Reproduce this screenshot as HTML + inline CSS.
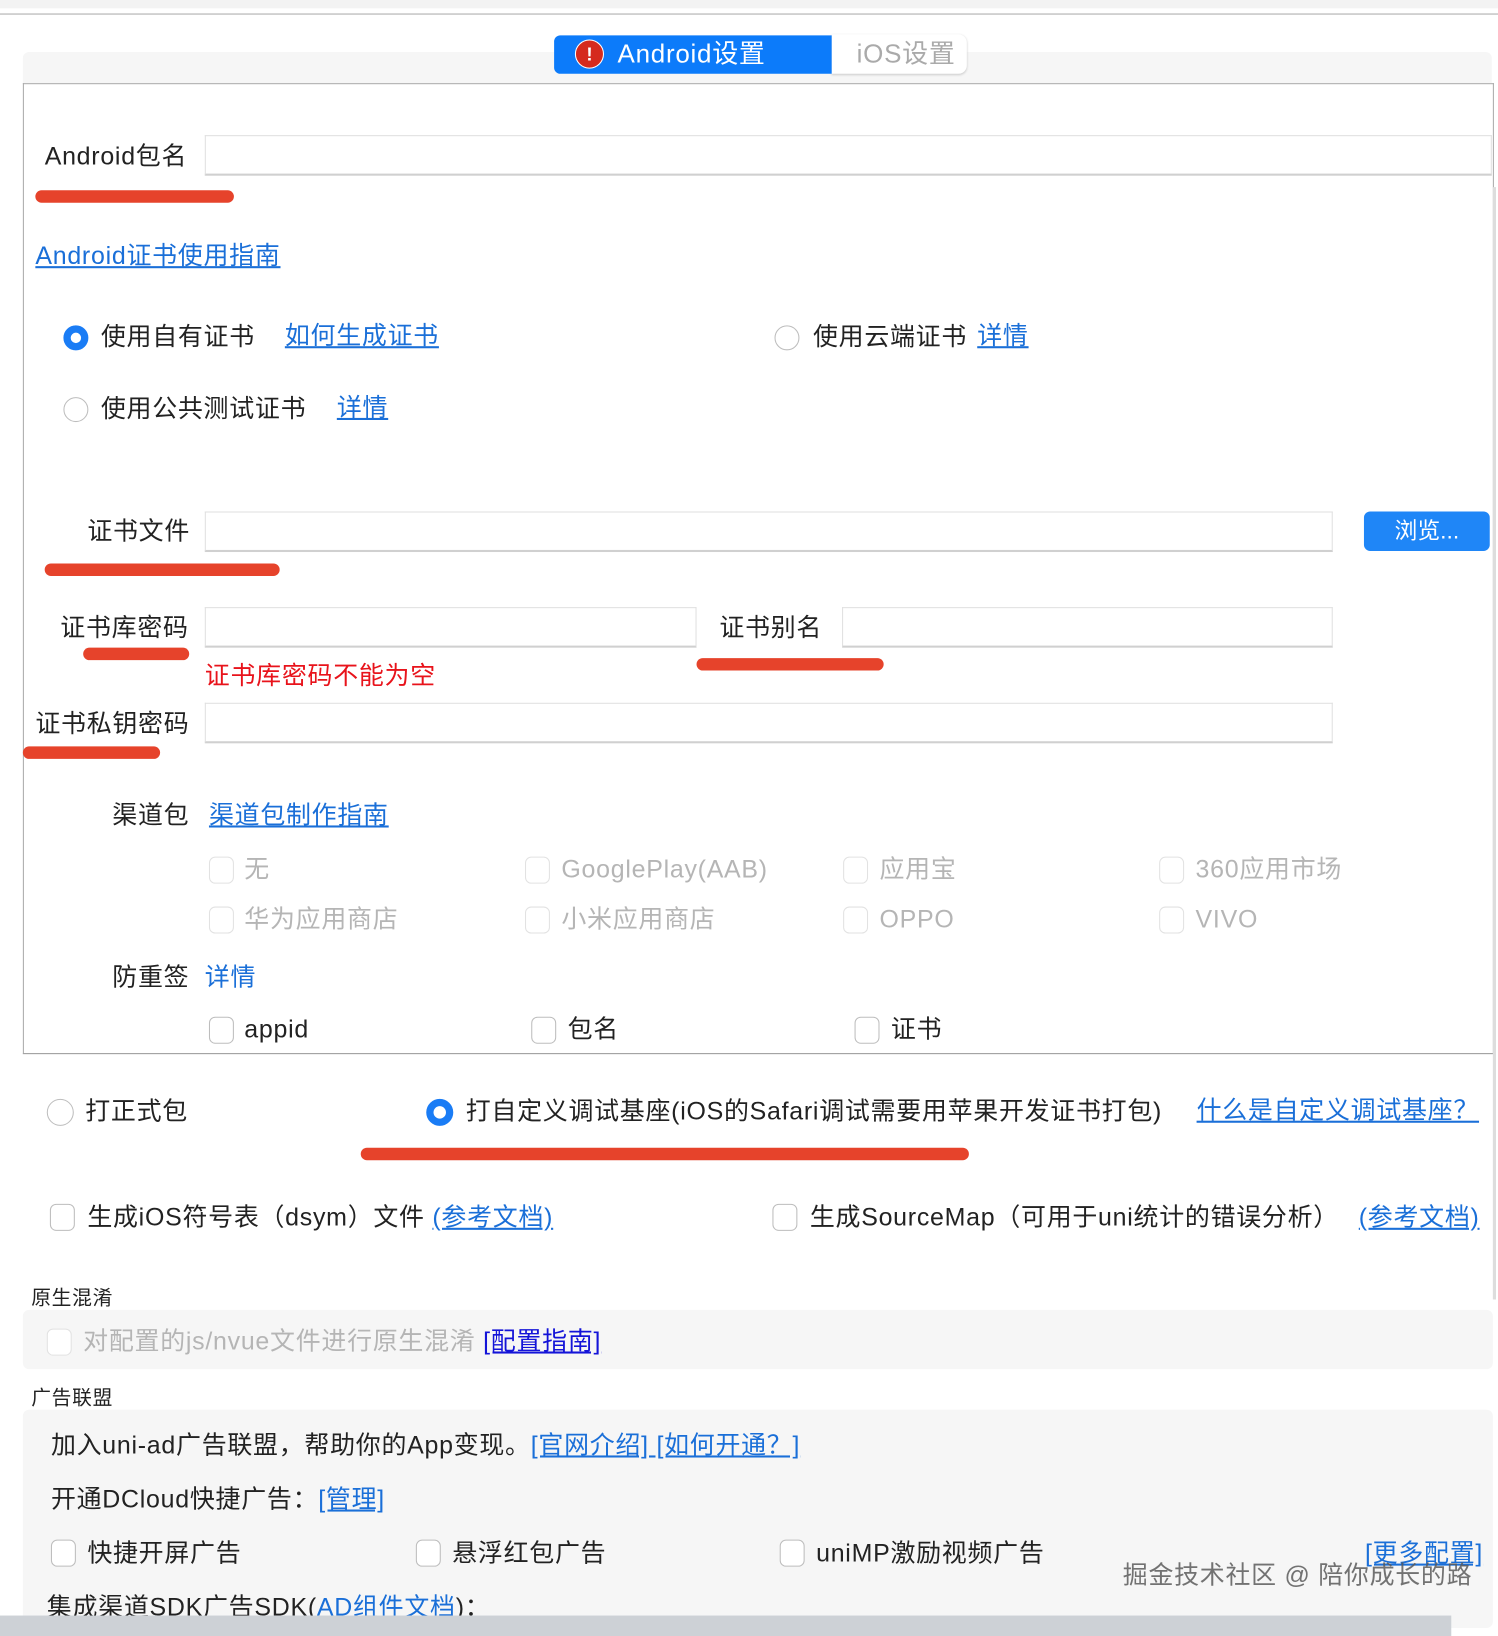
<!DOCTYPE html>
<html><head><meta charset="utf-8"><style>
body{margin:0;width:1498px;height:1630px;background:#fff;position:relative;overflow:hidden;font-family:"Liberation Sans","Noto Sans CJK SC",sans-serif;color:#222;}
#w{position:absolute;left:0;top:0;width:1441px;height:1568px;transform:scale(1.0396);transform-origin:0 0;}
.a{position:absolute;white-space:nowrap;font-size:24px;line-height:30px;letter-spacing:0.7px;}
.l{color:#1a6fd8;text-decoration:underline;}
.g{color:#b5b5b5;}
.in{position:absolute;border:1px solid #e0e0e0;border-bottom:2px solid #d0d0d0;background:#fff;height:36px;}
.r{position:absolute;background:#e6432b;border-radius:8px;height:12px;}
.rad{position:absolute;width:24px;height:24px;border-radius:50%;border:1px solid #bdbdbd;box-sizing:border-box;background:#fff;}
.rad.on{border:7px solid #1a7cf5;}
.cb{position:absolute;width:24px;height:26px;border-radius:6px;border:1px solid #bdbdbd;box-sizing:border-box;background:#fff;}
.cb.d{border-color:#e2e2e2;}
</style></head><body><div id="w">
<div style="position:absolute;left:0;top:0;width:1441px;height:8px;background:#f3f3f3"></div>
<div style="position:absolute;left:0;top:13px;width:1441px;height:1px;background:#aaa"></div>
<div style="position:absolute;left:22px;top:50px;width:1413px;height:30px;background:#f6f6f6;border-radius:6px 6px 0 0"></div>
<div style="position:absolute;left:22px;top:80px;width:1413px;height:932px;border:1px solid #aaa;border-bottom:1px solid #999"></div>
<div style="position:absolute;left:1436px;top:180px;width:3px;height:1070px;background:#ddd"></div>
<div style="position:absolute;left:800px;top:33px;width:130px;height:38px;background:#fff;border-radius:0 8px 8px 0;box-shadow:0 1px 2px #ccc"></div>
<div style="position:absolute;left:533px;top:34px;width:267px;height:37px;background:#0c7bfa;border-radius:6px 0 0 6px"></div>
<div style="position:absolute;left:553px;top:38px;width:26px;height:26px;border-radius:50%;background:#d52a1e;border:1px solid #fff;color:#fff;font:bold 18px/26px 'Liberation Sans';text-align:center">!</div>
<div class="a" style="left:594px;top:37px;color:#fff;font-size:25px">Android设置</div>
<div class="a g" style="left:824px;top:37px;font-size:25px;color:#aaa">iOS设置</div>

<div class="a" style="left:43px;top:136px">Android包名</div>
<div class="in" style="left:197px;top:130px;width:1236px"></div>
<div class="r" style="left:34px;top:183px;width:191px"></div>
<div class="a l" style="left:34px;top:232px">Android证书使用指南</div>

<div class="rad on" style="left:61px;top:313px"></div>
<div class="a" style="left:97px;top:310px">使用自有证书</div>
<div class="a l" style="left:274px;top:309px">如何生成证书</div>
<div class="rad" style="left:745px;top:313px"></div>
<div class="a" style="left:782px;top:310px">使用云端证书</div>
<div class="a l" style="left:940px;top:309px">详情</div>
<div class="rad" style="left:61px;top:382px"></div>
<div class="a" style="left:97px;top:379px">使用公共测试证书</div>
<div class="a l" style="left:324px;top:378px">详情</div>

<div class="a" style="left:84px;top:497px">证书文件</div>
<div class="in" style="left:197px;top:492px;width:1083px"></div>
<div style="position:absolute;left:1312px;top:492px;width:121px;height:38px;background:#1f86f7;border-radius:6px;color:#fff;font-size:22px;line-height:38px;text-align:center">浏览...</div>
<div class="r" style="left:43px;top:542px;width:226px"></div>
<div class="a" style="left:58px;top:590px">证书库密码</div>
<div class="in" style="left:197px;top:584px;width:471px"></div>
<div class="r" style="left:80px;top:623px;width:102px"></div>
<div class="a" style="left:692px;top:590px">证书别名</div>
<div class="in" style="left:810px;top:584px;width:470px"></div>
<div class="r" style="left:670px;top:633px;width:180px"></div>
<div class="a" style="left:197px;top:636px;color:#e8131b">证书库密码不能为空</div>
<div class="a" style="left:34px;top:682px">证书私钥密码</div>
<div class="in" style="left:197px;top:676px;width:1083px"></div>
<div class="r" style="left:22px;top:718px;width:132px"></div>

<div class="a" style="left:108px;top:770px">渠道包</div>
<div class="a l" style="left:201px;top:770px">渠道包制作指南</div>
<div class="cb d" style="left:201px;top:824px"></div><div class="a g" style="left:235px;top:822px">无</div>
<div class="cb d" style="left:505px;top:824px"></div><div class="a g" style="left:540px;top:822px">GooglePlay(AAB)</div>
<div class="cb d" style="left:811px;top:824px"></div><div class="a g" style="left:846px;top:822px">应用宝</div>
<div class="cb d" style="left:1115px;top:824px"></div><div class="a g" style="left:1150px;top:822px">360应用市场</div>
<div class="cb d" style="left:201px;top:872px"></div><div class="a g" style="left:235px;top:870px">华为应用商店</div>
<div class="cb d" style="left:505px;top:872px"></div><div class="a g" style="left:540px;top:870px">小米应用商店</div>
<div class="cb d" style="left:811px;top:872px"></div><div class="a g" style="left:846px;top:870px">OPPO</div>
<div class="cb d" style="left:1115px;top:872px"></div><div class="a g" style="left:1150px;top:870px">VIVO</div>
<div class="a" style="left:108px;top:926px">防重签</div>
<div class="a l" style="left:197px;top:926px;text-decoration:none">详情</div>
<div class="cb" style="left:201px;top:978px"></div><div class="a" style="left:235px;top:976px">appid</div>
<div class="cb" style="left:511px;top:978px"></div><div class="a" style="left:546px;top:976px">包名</div>
<div class="cb" style="left:822px;top:978px"></div><div class="a" style="left:857px;top:976px">证书</div>

<div class="rad" style="left:45px;top:1057px;width:26px;height:26px"></div>
<div class="a" style="left:82px;top:1055px">打正式包</div>
<div class="rad on" style="left:410px;top:1057px;width:26px;height:26px"></div>
<div class="a" style="left:448px;top:1055px">打自定义调试基座(iOS的Safari调试需要用苹果开发证书打包)</div>
<div class="a l" style="left:1151px;top:1054px">什么是自定义调试基座？</div>
<div class="r" style="left:347px;top:1104px;width:585px"></div>

<div class="cb" style="left:48px;top:1158px"></div>
<div class="a" style="left:84px;top:1157px">生成iOS符号表（dsym）文件 <span class="l">(参考文档)</span></div>
<div class="cb" style="left:743px;top:1158px"></div>
<div class="a" style="left:779px;top:1157px">生成SourceMap（可用于uni统计的错误分析）</div>
<div class="a l" style="left:1307px;top:1157px">(参考文档)</div>

<div class="a" style="left:30px;top:1235px;font-size:19px">原生混淆</div>
<div style="position:absolute;left:22px;top:1260px;width:1414px;height:57px;background:#f6f6f6;border-radius:6px"></div>
<div class="cb d" style="left:45px;top:1278px"></div>
<div class="a g" style="left:80px;top:1276px">对配置的js/nvue文件进行原生混淆 <span style="color:#1414d8;text-decoration:underline">[配置指南]</span></div>

<div class="a" style="left:30px;top:1331px;font-size:19px">广告联盟</div>
<div style="position:absolute;left:22px;top:1356px;width:1414px;height:210px;background:#f6f6f6;border-radius:6px"></div>
<div class="a" style="left:49px;top:1376px">加入uni-ad广告联盟，帮助你的App变现。<span class="l">[官网介绍] [如何开通？]</span></div>
<div class="a" style="left:49px;top:1428px">开通DCloud快捷广告：<span class="l">[管理]</span></div>
<div class="cb" style="left:49px;top:1481px"></div><div class="a" style="left:84px;top:1480px">快捷开屏广告</div>
<div class="cb" style="left:400px;top:1481px"></div><div class="a" style="left:435px;top:1480px">悬浮红包广告</div>
<div class="cb" style="left:750px;top:1481px"></div><div class="a" style="left:785px;top:1480px">uniMP激励视频广告</div>
<div class="a l" style="left:1313px;top:1480px">[更多配置]</div>
<div class="a" style="left:1080px;top:1501px;color:rgba(90,90,90,.85)">掘金技术社区 @ 陪你成长的路</div>
<div class="a" style="left:45px;top:1532px">集成渠道SDK广告SDK(<span class="l">AD组件文档</span>)：</div>
<div style="position:absolute;left:0;top:1554px;width:1396px;height:20px;background:#cdd1d6"></div>
</div></body></html>
